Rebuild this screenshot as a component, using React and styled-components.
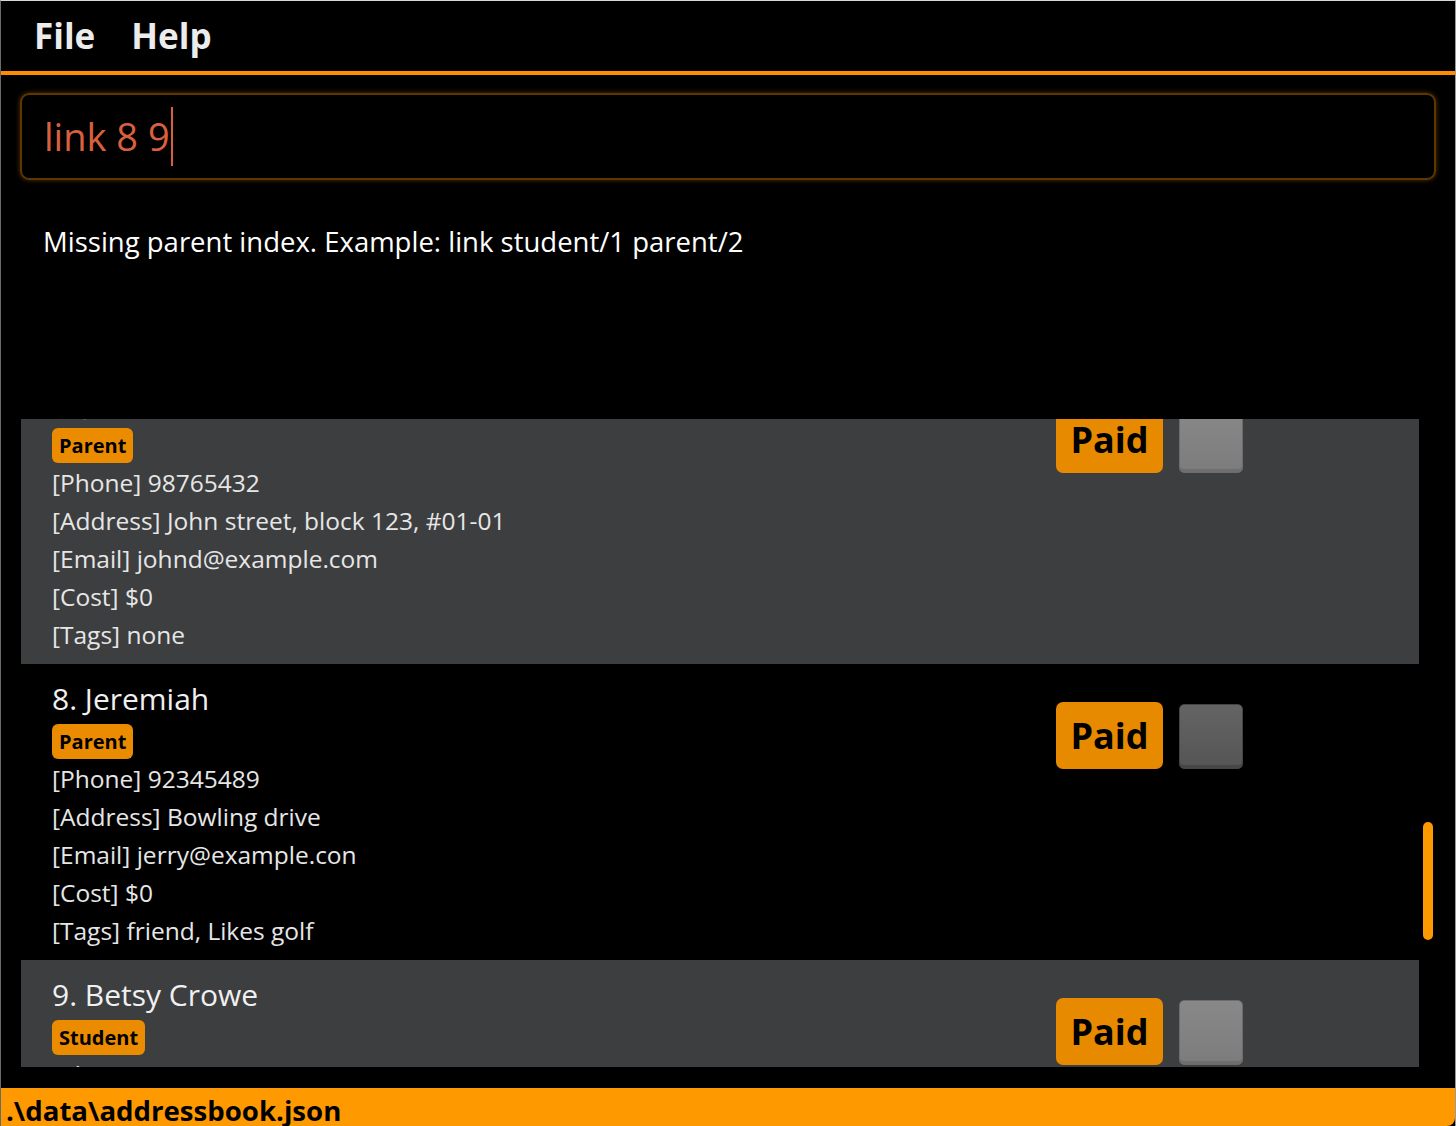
import React from "react";
import styled, { createGlobalStyle } from "styled-components";

const GlobalStyle = createGlobalStyle`
  html, body {
    margin: 0;
    padding: 0;
    background: #000;
  }
  * {
    box-sizing: border-box;
  }
`;

const people = [
  {
    name: "7. John Doe",
    role: "Parent",
    phone: "98765432",
    address: "John street, block 123, #01-01",
    email: "johnd@example.com",
    cost: "$0",
    tags: "none",
  },
  {
    name: "8. Jeremiah",
    role: "Parent",
    phone: "92345489",
    address: "Bowling drive",
    email: "jerry@example.con",
    cost: "$0",
    tags: "friend, Likes golf",
  },
  {
    name: "9. Betsy Crowe",
    role: "Student",
    phone: "90000000",
    address: "Newgate Prison",
    email: "betsycrowe@example.com",
    cost: "$0",
    tags: "none",
  },
];

export default function App() {
  return (
    <>
      <GlobalStyle />
      <Window>
        <MenuBar>
          <MenuItem>File</MenuItem>
          <MenuItem>Help</MenuItem>
        </MenuBar>
        <CommandBox>
          <CommandText>link 8 9</CommandText>
          <Caret />
        </CommandBox>
        <ResultBox>Missing parent index. Example: link student/1 parent/2</ResultBox>
        <ListPanel>
          <Viewport>
            <CardStack>
              {people.map((p, i) => (
                <Card key={p.name} $odd={i % 2 === 0}>
                  <Details>
                    <Name>{p.name}</Name>
                    <Tag>{p.role}</Tag>
                    <Field>[Phone] {p.phone}</Field>
                    <Field>[Address] {p.address}</Field>
                    <Field>[Email] {p.email}</Field>
                    <Field>[Cost] {p.cost}</Field>
                    <Field>[Tags] {p.tags}</Field>
                  </Details>
                  <Actions>
                    <PaidButton>Paid</PaidButton>
                    <CheckBox $odd={i % 2 === 0} />
                  </Actions>
                </Card>
              ))}
            </CardStack>
          </Viewport>
          <ScrollTrack>
            <ScrollThumb />
          </ScrollTrack>
        </ListPanel>
        <StatusBar>.\data\addressbook.json</StatusBar>
      </Window>
    </>
  );
}

const Window = styled.div`
  width: 1456px;
  height: 1126px;
  background: #000;
  display: flex;
  flex-direction: column;
  font-family: "Open Sans", "Noto Sans", sans-serif;
  border-top: 1px solid #d8d8d8;
  border-left: 1px solid #6a6a6a;
  border-right: 1px solid #9a9a9a;
  overflow: hidden;
`;

const MenuBar = styled.div`
  height: 74px;
  flex-shrink: 0;
  display: flex;
  align-items: center;
  gap: 36px;
  padding: 0 0 0 33px;
  border-bottom: 4px solid #ff8c00;
`;

const MenuItem = styled.span`
  color: #ececec;
  font-weight: 700;
  font-size: 35px;
  margin-top: -2px;
`;

const CommandBox = styled.div`
  margin: 18px 19px 0 19px;
  height: 87px;
  flex-shrink: 0;
  border: 2px solid #5a3800;
  border-radius: 9px;
  box-shadow: 0 0 5px rgba(255, 140, 0, 0.35);
  display: flex;
  align-items: center;
  padding-left: 22px;
`;

const CommandText = styled.span`
  color: #d8603f;
  font-size: 38px;
  line-height: 1;
  margin-top: -1px;
`;

const Caret = styled.span`
  width: 2px;
  height: 59px;
  background: #d8603f;
  margin-left: 1px;
`;

const ResultBox = styled.div`
  height: 239px;
  flex-shrink: 0;
  padding: 42px 0 0 42px;
  color: #ffffff;
  font-size: 27.5px;
  line-height: 40px;
`;

const ListPanel = styled.div`
  height: 648px;
  flex-shrink: 0;
  margin: 0 19px 0 20px;
  display: flex;
`;

const Viewport = styled.div`
  flex: 1;
  overflow: hidden;
`;

const CardStack = styled.div`
  margin-top: -51px;
`;

const Card = styled.div`
  height: 296px;
  display: flex;
  justify-content: space-between;
  background: ${(p) => (p.$odd ? "#3d3e40" : "#000")};
  padding: 13px 0 0 31px;
`;

const Details = styled.div`
  display: flex;
  flex-direction: column;
  align-items: flex-start;
`;

const Name = styled.div`
  color: #f0f0f0;
  font-size: 30px;
  line-height: 44px;
`;

const Tag = styled.div`
  margin-top: 3px;
  height: 35px;
  padding: 0 7px;
  background: #eb8c00;
  border-radius: 6px;
  color: #000;
  font-weight: 700;
  font-size: 20px;
  line-height: 35px;
`;

const Field = styled.div`
  color: #e6e6e6;
  font-size: 24.5px;
  line-height: 38px;
  white-space: nowrap;
  position: relative;
  top: 1px;
`;

const Actions = styled.div`
  display: flex;
  align-items: center;
  gap: 16px;
  padding: 25px 176px 0 0;
  align-self: flex-start;
`;

const PaidButton = styled.div`
  width: 107px;
  height: 67px;
  background: #e88a00;
  border-radius: 7px;
  color: #000;
  font-weight: 700;
  font-size: 36px;
  display: flex;
  align-items: center;
  justify-content: center;
`;

const CheckBox = styled.div`
  width: 64px;
  height: 65px;
  margin-top: 2px;
  border-radius: 5px;
  border: 1px solid ${(p) => (p.$odd ? "#6c6c6c" : "#444")};
  background: ${(p) =>
    p.$odd
      ? "linear-gradient(#888888, #7c7c7c)"
      : "linear-gradient(#646464, #555555)"};
  box-shadow: inset 0 -3px 0 ${(p) => (p.$odd ? "#6e6e6e" : "#474747")};
`;

const ScrollTrack = styled.div`
  width: 17px;
  padding: 403px 0 0 4px;
`;

const ScrollThumb = styled.div`
  width: 10px;
  height: 118px;
  border-radius: 5px;
  background: #ff9900;
`;

const StatusBar = styled.div`
  margin-top: auto;
  height: 38px;
  flex-shrink: 0;
  background: #ff9900;
  border-bottom-right-radius: 8px;
  color: #000;
  font-weight: 700;
  font-size: 27.6px;
  line-height: 44px;
  padding-left: 5px;
  overflow: hidden;
`;
